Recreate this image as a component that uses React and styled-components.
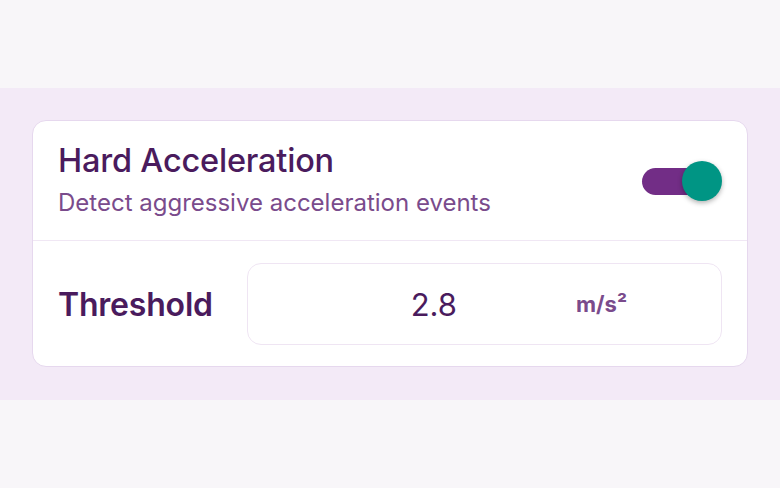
import React, { useState } from "react";
import styled, { createGlobalStyle } from "styled-components";

const GlobalStyle = createGlobalStyle`
  html, body {
    margin: 0;
    padding: 0;
    background: #f8f6f9;
    font-family: Inter, "Noto Sans", sans-serif;
  }
`;

const Page = styled.div`
  width: 780px;
  height: 488px;
  padding-top: 88px;
  box-sizing: border-box;
`;

const Band = styled.section`
  background: #f3eaf7;
  padding: 32px 32px 33px;
`;

const Card = styled.div`
  background: #ffffff;
  border: 1px solid #e6d8ee;
  border-radius: 14px;
  overflow: hidden;
`;

const Header = styled.div`
  display: flex;
  align-items: center;
  justify-content: space-between;
  padding: 20px 24px 22px 25px;
  border-bottom: 1px solid #f0e7f4;
`;

const Titles = styled.div`
  display: flex;
  flex-direction: column;
  gap: 7px;
`;

const Title = styled.h2`
  margin: 0;
  font-size: 32.5px;
  line-height: 40px;
  font-weight: 500;
  color: #4a1b5d;
  letter-spacing: -0.2px;
`;

const Subtitle = styled.p`
  margin: 0;
  font-size: 24px;
  line-height: 30px;
  color: #7a4b8c;
`;

const Toggle = styled.button`
  position: relative;
  width: 80px;
  height: 40px;
  padding: 0;
  border: none;
  background: transparent;
  cursor: pointer;
  margin-top: 2px;
`;

const Track = styled.span`
  position: absolute;
  left: -1px;
  top: 7px;
  width: 69px;
  height: 27px;
  border-radius: 14px;
  background: ${(p) => (p.$on ? "#722d86" : "#cbbcd3")};
`;

const Knob = styled.span`
  position: absolute;
  top: 0;
  left: ${(p) => (p.$on ? "39px" : "0")};
  width: 40px;
  height: 40px;
  border-radius: 50%;
  background: ${(p) => (p.$on ? "#009584" : "#ffffff")};
  box-shadow: 0 2px 5px rgba(0, 0, 0, 0.3);
`;

const Body = styled.div`
  display: flex;
  align-items: center;
  gap: 34px;
  padding: 22px 25px 21px 25px;
`;

const Label = styled.label`
  font-size: 32px;
  font-weight: 600;
  color: #4a1b5d;
  letter-spacing: -0.2px;
`;

const Field = styled.div`
  flex: 1;
  min-width: 0;
  display: flex;
  align-items: center;
  height: 82px;
  box-sizing: border-box;
  border: 1px solid #efe5f3;
  border-radius: 14px;
  padding-right: 94px;
`;

const Input = styled.input`
  flex: 1;
  width: 0;
  min-width: 0;
  border: none;
  outline: none;
  background: transparent;
  text-align: center;
  padding: 0 12px 0 56px;
  font-family: inherit;
  font-size: 31px;
  color: #4a1b5d;
`;

const Unit = styled.span`
  font-size: 22px;
  font-weight: 700;
  color: #7a4b8c;
`;

export default function App() {
  const [on, setOn] = useState(true);
  const [value, setValue] = useState("2.8");
  return (
    <>
      <GlobalStyle />
      <Page>
        <Band>
          <Card>
            <Header>
              <Titles>
                <Title>Hard Acceleration</Title>
                <Subtitle>Detect aggressive acceleration events</Subtitle>
              </Titles>
              <Toggle onClick={() => setOn(!on)} aria-label="toggle">
                <Track $on={on} />
                <Knob $on={on} />
              </Toggle>
            </Header>
            <Body>
              <Label>Threshold</Label>
              <Field>
                <Input value={value} onChange={(e) => setValue(e.target.value)} />
                <Unit>m/s²</Unit>
              </Field>
            </Body>
          </Card>
        </Band>
      </Page>
    </>
  );
}
